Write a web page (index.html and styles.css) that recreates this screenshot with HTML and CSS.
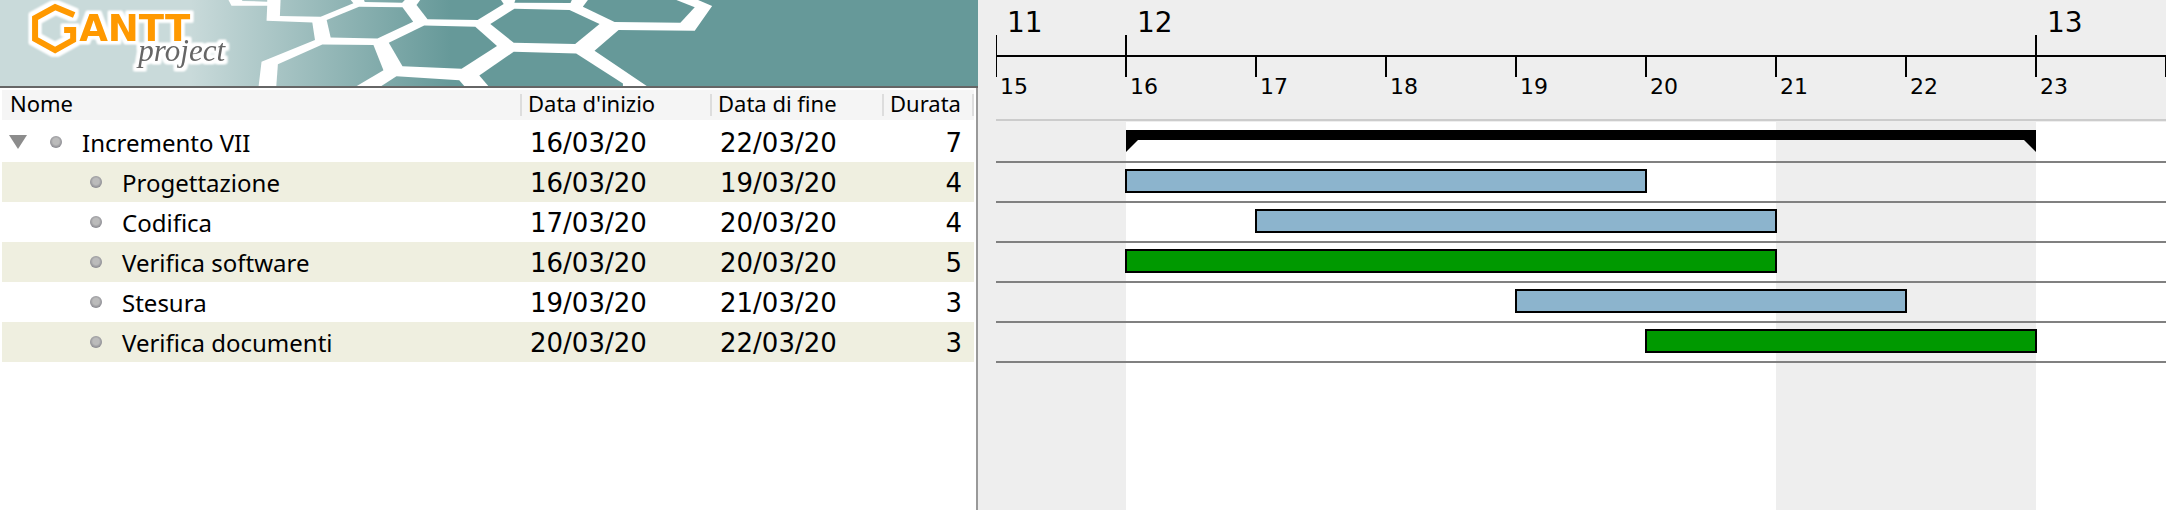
FILE: index.html
```html
<!DOCTYPE html>
<html lang="it">
<head>
<meta charset="utf-8">
<title>GanttProject</title>
<link rel="stylesheet" href="styles.css">
</head>
<body>
<div class="app">
  <section class="tasks">
    <header class="banner">
      <svg class="banner-art" viewBox="0 0 976 86" preserveAspectRatio="xMinYMin slice" role="img" aria-label="Gantt project">
        <defs>
          <linearGradient id="sea" gradientUnits="userSpaceOnUse" x1="190" y1="0" x2="450" y2="0">
            <stop offset="0" stop-color="#c9dada"/>
            <stop offset="1" stop-color="#669999"/>
          </linearGradient>
          <linearGradient id="seaCells" gradientUnits="userSpaceOnUse" x1="-120" y1="0" x2="660" y2="0">
            <stop offset="0" stop-color="#c9dada"/>
            <stop offset="1" stop-color="#669999"/>
          </linearGradient>
          <filter id="halo" filterUnits="userSpaceOnUse" x="0" y="-10" width="260" height="100" color-interpolation-filters="sRGB">
            <feMorphology in="SourceAlpha" operator="dilate" radius="3" result="fat"/>
            <feGaussianBlur in="fat" stdDeviation="1" result="soft"/>
            <feFlood flood-color="#fff"/>
            <feComposite in2="soft" operator="in" result="glow"/>
            <feMerge>
              <feMergeNode in="glow"/>
              <feMergeNode in="glow"/>
              <feMergeNode in="SourceGraphic"/>
            </feMerge>
          </filter>
        </defs>
        <rect width="3000" height="86" fill="url(#sea)"/>
        <g transform="translate(230 0) scale(.33333)">
          <path fill="#fff" d="M-6 0L3 17H110L108 62L245 67L253 120L93 185L84 260H1250L1090 152L1162 90L1390 92L1442 18L1400 0Z"/>
          <g fill="url(#seaCells)">
            <path d="M36 0H110V5L34 3Z"/>
            <path d="M150 0H360L368 10L270 50L148 48Z"/>
            <path d="M400 0H522L514 8L402 6Z"/>
            <path d="M568 0H810L818 12L740 60L590 58L557 15Z"/>
            <path d="M853 0H1022L1018 9L850 8Z"/>
            <path d="M1070 0H1335L1390 22L1347 68L1150 66L1055 20Z"/>
            <path d="M385 20L515 22L547 65L440 115L300 112L288 60Z"/>
            <path d="M850 26L1015 30L1105 72L1032 132L848 128L778 72Z"/>
            <path d="M580 76L733 80L798 138L692 206L515 198L474 128Z"/>
            <path d="M275 133L428 135L458 210L374 260H137L142 192Z"/>
            <path d="M848 155L1035 160L1175 250V260H774L745 226Z"/>
            <path d="M497 228L685 240L702 260H448Z"/>
          </g>
        </g>
        <g filter="url(#halo)">
          <path class="logo-g" d="M74 15L55 7L35 18V39L55 50L73 40V30H64"/>
          <text class="logo-caps" x="79" y="41">ANTT</text>
          <text class="logo-script" x="138" y="61">project</text>
        </g>
      </svg>
    </header>
    <table class="task-table">
      <colgroup><col><col class="col-start"><col class="col-end"><col class="col-length"></colgroup>
      <thead>
        <tr>
          <th scope="col"><span class="head head-first">Nome</span></th>
          <th scope="col"><span class="head">Data d'inizio</span></th>
          <th scope="col"><span class="head">Data di fine</span></th>
          <th scope="col"><span class="head head-last">Durata</span></th>
        </tr>
      </thead>
      <tbody>
        <tr class="spacer"><td colspan="4"></td></tr>
        <tr>
          <td><div class="name"><button class="toggle" type="button" aria-label="Comprimi" aria-expanded="true"></button><i class="dot"></i>Incremento VII</div></td>
          <td class="date">16/03/20</td><td class="date">22/03/20</td><td class="length">7</td>
        </tr>
        <tr class="band">
          <td><div class="name child"><i class="dot"></i>Progettazione</div></td>
          <td class="date">16/03/20</td><td class="date">19/03/20</td><td class="length">4</td>
        </tr>
        <tr>
          <td><div class="name child"><i class="dot"></i>Codifica</div></td>
          <td class="date">17/03/20</td><td class="date">20/03/20</td><td class="length">4</td>
        </tr>
        <tr class="band">
          <td><div class="name child"><i class="dot"></i>Verifica software</div></td>
          <td class="date">16/03/20</td><td class="date">20/03/20</td><td class="length">5</td>
        </tr>
        <tr>
          <td><div class="name child"><i class="dot"></i>Stesura</div></td>
          <td class="date">19/03/20</td><td class="date">21/03/20</td><td class="length">3</td>
        </tr>
        <tr class="band">
          <td><div class="name child"><i class="dot"></i>Verifica documenti</div></td>
          <td class="date">20/03/20</td><td class="date">22/03/20</td><td class="length">3</td>
        </tr>
      </tbody>
    </table>
  </section>

  <section class="timeline">
    <div class="weeks">
      <div class="week span-1">11</div>
      <div class="week span-7">12</div>
      <div class="week span-1">13</div>
    </div>
    <div class="days">
      <div class="day">15</div>
      <div class="day">16</div>
      <div class="day">17</div>
      <div class="day">18</div>
      <div class="day">19</div>
      <div class="day">20</div>
      <div class="day">21</div>
      <div class="day">22</div>
      <div class="day day-last">23</div>
    </div>
    <div class="chart">
      <div class="shading"><i class="off off-first"></i><i class="off off-weekend"></i></div>
      <div class="rows">
        <div class="row row-summary">
          <svg class="summary from-16 to-23" aria-hidden="true">
            <rect width="100%" height="10"/>
            <path d="M0 10H12L0 22Z"/>
            <svg x="100%" overflow="visible"><path d="M0 10H-12L0 22Z"/></svg>
          </svg>
        </div>
        <div class="row"><div class="bar blue from-16 to-20"></div></div>
        <div class="row"><div class="bar blue from-17 to-21"></div></div>
        <div class="row"><div class="bar green from-16 to-21"></div></div>
        <div class="row"><div class="bar blue from-19 to-22"></div></div>
        <div class="row"><div class="bar green from-20 to-23"></div></div>
      </div>
    </div>
  </section>
</div>
</body>
</html>
```

FILE: styles.css
```css
* { box-sizing: border-box; }

body {
  margin: 0;
  background: #fff;
  color: #000;
  font-family: "Noto Sans", "Open Sans", sans-serif;
}

.app {
  display: grid;
  grid-template-columns: minmax(0, 978fr) minmax(0, 1188fr);
  min-height: 100vh;
}

/* Task list */
.tasks {
  display: flex;
  flex-direction: column;
  background: linear-gradient(#999, #999) right / 2px 100% no-repeat;
}

.banner {
  height: 88px;
  border-bottom: 2px solid #666;
  background: #699;
}

.banner-art { display: block; width: 100%; height: 86px; }

.logo-g { fill: none; stroke: #f90; stroke-width: 6; }
.logo-caps { font: bold 37px "DejaVu Sans", sans-serif; fill: #f90; }
.logo-script { font: italic 31px "Liberation Serif", serif; fill: #666; }

.task-table {
  align-self: stretch;
  width: calc(100% - 6px);
  margin: 2px 4px 0 2px;
  border-collapse: collapse;
  table-layout: fixed;
}

.col-start { width: 190px; }
.col-end { width: 172px; }
.col-length { width: 92px; }

th { padding: 4px 0; background: #f5f5f5; font-weight: 400; text-align: left; }
td { height: 40px; padding: 0; }

.head {
  display: block;
  height: 22px;
  padding-left: 6px;
  border-left: 2px solid #ddd;
  font-size: 22px;
  line-height: 18px;
  white-space: nowrap;
}

.head-first { border-left-color: transparent; }
.head-last { border-right: 2px solid #ddd; }

.spacer td { height: 2px; }
.band { background: #efefe0; }

.name {
  display: flex;
  align-items: center;
  padding: 2px 0 0 7px;
  font-size: 24px;
  line-height: 38px;
  white-space: nowrap;
}

.child { padding-left: 88px; }

.toggle {
  width: 18px;
  height: 14px;
  margin: 0 23px 2px 0;
  padding: 0;
  border: 0;
  background: #8c8c8c;
  clip-path: polygon(0 0, 100% 0, 50% 100%);
}

.dot {
  width: 12px;
  height: 12px;
  margin: 0 20px 2px 0;
  border-radius: 50%;
  background: radial-gradient(circle at 50% 45%, #bbb 35%, #85858c 75%);
}

.date, .length {
  padding-top: 2px;
  font-family: "DejaVu Sans", sans-serif;
  font-size: 26px;
  line-height: 38px;
}

.date { padding-left: 10px; }
.length { padding-right: 12px; text-align: right; }

/* Timeline */
.timeline {
  display: flex;
  flex-direction: column;
  padding-left: 18px;
  background: #eee;
  font-family: "DejaVu Sans", sans-serif;
}

.weeks, .days, .shading, .row {
  display: grid;
  grid-template-columns: repeat(9, minmax(0, 1fr));
}

.weeks, .days, .chart { overflow: hidden; }
.weeks { border-bottom: 2px solid #000; }
.days { height: 64px; border-bottom: 2px solid #ccc; font-size: 22px; line-height: 20px; }

.week {
  margin-left: -1px;
  padding: 10px 0 0 12px;
  font-size: 28px;
  line-height: 25px;
}

.week::after {
  content: "";
  display: block;
  height: 20px;
  margin-left: -12px;
  border-left: 2px solid #000;
}

.span-1 { grid-column: span 1; }
.span-7 { grid-column: span 7; }

.day { margin-left: -1px; padding-left: 5px; }

.day::before {
  content: "";
  display: block;
  height: 20px;
  margin-left: -5px;
  border-left: 2px solid #000;
}

.day-last::before { border-right: 1px solid #000; }

.chart {
  display: grid;
  flex: 1;
  margin-top: 1px;
  background: #fff;
}

.shading, .rows { grid-area: 1 / 1; }
.off { background: #eee; }
.off-first { grid-column: 1; }
.off-weekend { grid-column: 7 / 9; }

.row {
  height: 40px;
  padding-top: 6px;
  border-bottom: 2px solid #808080;
}

.row-summary { height: 41px; padding-top: 8px; }
.summary { width: 100%; height: 22px; }

.bar {
  height: 24px;
  margin: 0 -1px;
  border: 2px solid #000;
}

.blue { background: #8cb4cd; }
.green { background: #090; }

.from-16 { grid-column-start: 2; }
.from-17 { grid-column-start: 3; }
.from-19 { grid-column-start: 5; }
.from-20 { grid-column-start: 6; }
.to-20 { grid-column-end: 6; }
.to-21 { grid-column-end: 7; }
.to-22 { grid-column-end: 8; }
.to-23 { grid-column-end: 9; }
```
